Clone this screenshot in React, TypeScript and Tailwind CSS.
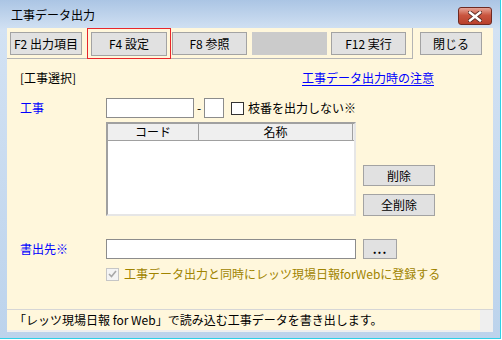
import React from 'react';

const font = "font-['Noto_Sans_CJK_JP','Noto_Sans',sans-serif]";

const Btn: React.FC<{ className?: string; children?: React.ReactNode }> = ({ className = '', children }) => (
  <button
    className={`flex items-center justify-center border border-[#a3a3a3] bg-[#e1e1e1] text-[12px] leading-none text-black ${className}`}
  >
    {children}
  </button>
);

const Input: React.FC<{ className?: string }> = ({ className = '' }) => (
  <div className={`border border-[#8c8c8c] bg-white ${className}`} />
);

const App: React.FC = () => {
  return (
    <div className={`${font} w-[502px] h-[340px] bg-white`}>
      <div className="w-[501px] h-[339px] border-r border-b border-[#2fd0e6] bg-gradient-to-b from-[#abc5e4] via-[#d3e2f3] via-[9%] to-[#bcd3ec] flex flex-col">
        {/* タイトルバー */}
        <div className="h-[28px] flex items-start pl-[11px] pr-[8px]">
          <span className="mt-[8px] text-[12px] leading-[14px] text-black">工事データ出力</span>
          <div className="ml-auto mt-[7px] w-[34px] h-[18px] rounded-[3px] border border-[#6e2a22] bg-gradient-to-b from-[#e5a497] via-[#c9553f] via-[45%] to-[#b8402b] flex items-center justify-center">
            <svg width="14" height="11" viewBox="0 0 14 11">
              <path d="M2 1.5 L12 9.5 M12 1.5 L2 9.5" stroke="#5a2a24" strokeWidth="4.2" strokeLinecap="square" />
              <path d="M2 1.5 L12 9.5 M12 1.5 L2 9.5" stroke="#ffffff" strokeWidth="2.4" strokeLinecap="square" />
            </svg>
          </div>
        </div>

        {/* クライアント領域 */}
        <div className="mx-[7px] w-[486px] h-[304px] bg-[#fff7dc] flex flex-col text-[12px] leading-[14px] text-black">
          {/* ツールバー */}
          <div className="flex items-start">
            <div className="w-[406px] h-[31px] border-r border-b border-[#b4b4b4] flex items-start pl-[3px]">
              <Btn className="mt-[4px] w-[72px] h-[23px]">F2 出力項目</Btn>
              <div className="ml-[5px] w-[84px] h-[31px] border border-[#e8262b] flex items-start justify-center">
                <Btn className="mt-[3px] w-[76px] h-[24px]">F4 設定</Btn>
              </div>
              <Btn className="mt-[4px] ml-[1px] w-[75px] h-[23px]">F8 参照</Btn>
              <div className="mt-[4px] ml-[5px] w-[75px] h-[23px] bg-[#cbcbcb]" />
              <Btn className="mt-[4px] ml-[4px] w-[75px] h-[23px]">F12 実行</Btn>
            </div>
            <Btn className="mt-[4px] ml-[7px] w-[62px] h-[23px]">閉じる</Btn>
          </div>

          {/* 本体 */}
          <div className="flex-1 flex flex-col pl-[13px]">
            <div className="mt-[11px] w-[414px] h-[16px] flex items-center justify-between">
              <span>[工事選択]</span>
              <span className="text-[#0000ff] underline underline-offset-2">工事データ出力時の注意</span>
            </div>

            <div className="mt-[12px] h-[20px] flex items-center">
              <span className="w-[86px] text-[#0000ff]">工事</span>
              <Input className="w-[88px] h-[20px]" />
              <span className="mx-[3px] w-[4px] text-center">-</span>
              <Input className="w-[20px] h-[20px]" />
              <div className="ml-[7px] w-[13px] h-[13px] border border-[#333333] bg-white" />
              <span className="ml-[4px]">枝番を出力しない※</span>
            </div>

            <div className="mt-[4px] flex items-end">
              <div className="ml-[86px] w-[250px] h-[94px] border-2 border-t-[#a0a0a0] border-l-[#a0a0a0] border-r-[#e6e6e6] border-b-[#e6e6e6] bg-white flex flex-col">
                <div className="h-[17px] flex bg-[#efefef] border-b border-[#a0a0a0]">
                  <div className="w-[91px] border-r border-[#a0a0a0] flex items-center justify-center">コード</div>
                  <div className="w-[154px] border-r border-[#a0a0a0] flex items-center justify-center">名称</div>
                </div>
              </div>
              <div className="ml-[7px] flex flex-col gap-[8px]">
                <Btn className="w-[72px] h-[21px]">削除</Btn>
                <Btn className="w-[72px] h-[22px]">全削除</Btn>
              </div>
            </div>

            <div className="mt-[23px] h-[20px] flex items-center">
              <span className="w-[86px] text-[#0000ff]">書出先※</span>
              <Input className="w-[250px] h-[20px]" />
              <Btn className="ml-[7px] w-[34px] h-[20px] font-bold tracking-[1px]">...</Btn>
            </div>

            <div className="mt-[8px] h-[14px] flex items-center pl-[86px]">
              <div className="w-[13px] h-[13px] border border-[#c6c6c6] bg-[#f4f4f4] flex items-center justify-center">
                <svg width="9" height="8" viewBox="0 0 9 8">
                  <path d="M1 4 L3.5 6.5 L8 1" fill="none" stroke="#a8a8a8" strokeWidth="1.6" />
                </svg>
              </div>
              <span className="ml-[5px] text-[#a08400]">工事データ出力と同時にレッツ現場日報forWebに登録する</span>
            </div>
          </div>

          {/* ステータスバー */}
          <div className="h-[23px] border-t border-[#d6d6d6] bg-[#efefef] flex flex-col">
            <div className="h-[20px] flex">
              <div className="w-[473px] bg-[#fff7dc] flex items-center pl-[7px]">
                「レッツ現場日報 for Web」で読み込む工事データを書き出します。
              </div>
            </div>
          </div>
        </div>
      </div>
    </div>
  );
};

export default App;
